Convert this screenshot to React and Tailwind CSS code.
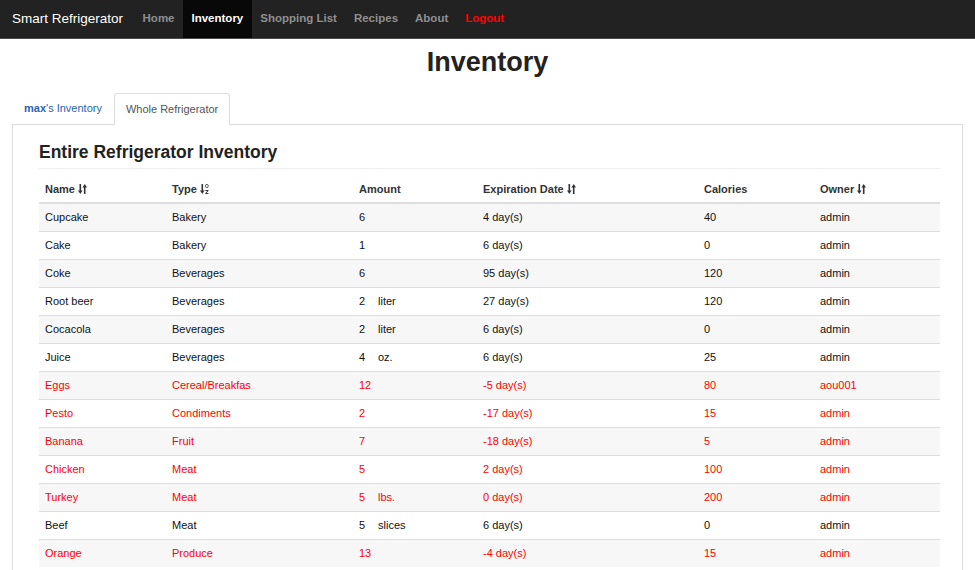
import React from 'react';

const NAV = [
  { label: 'Home' },
  { label: 'Inventory', active: true },
  { label: 'Shopping List' },
  { label: 'Recipes' },
  { label: 'About' },
  { label: 'Logout', danger: true },
];

const ROWS = [
  { name: 'Cupcake', type: 'Bakery', amount: '6', unit: '', exp: '4', cal: '40', owner: 'admin' },
  { name: 'Cake', type: 'Bakery', amount: '1', unit: '', exp: '6', cal: '0', owner: 'admin' },
  { name: 'Coke', type: 'Beverages', amount: '6', unit: '', exp: '95', cal: '120', owner: 'admin' },
  { name: 'Root beer', type: 'Beverages', amount: '2', unit: 'liter', exp: '27', cal: '120', owner: 'admin' },
  { name: 'Cocacola', type: 'Beverages', amount: '2', unit: 'liter', exp: '6', cal: '0', owner: 'admin' },
  { name: 'Juice', type: 'Beverages', amount: '4', unit: 'oz.', exp: '6', cal: '25', owner: 'admin' },
  { name: 'Eggs', type: 'Cereal/Breakfas', amount: '12', unit: '', exp: '-5', cal: '80', owner: 'aou001', expired: true },
  { name: 'Pesto', type: 'Condiments', amount: '2', unit: '', exp: '-17', cal: '15', owner: 'admin', expired: true },
  { name: 'Banana', type: 'Fruit', amount: '7', unit: '', exp: '-18', cal: '5', owner: 'admin', expired: true },
  { name: 'Chicken', type: 'Meat', amount: '5', unit: '', exp: '2', cal: '100', owner: 'admin', expired: true },
  { name: 'Turkey', type: 'Meat', amount: '5', unit: 'lbs.', exp: '0', cal: '200', owner: 'admin', expired: true },
  { name: 'Beef', type: 'Meat', amount: '5', unit: 'slices', exp: '6', cal: '0', owner: 'admin' },
  { name: 'Orange', type: 'Produce', amount: '13', unit: '', exp: '-4', cal: '15', owner: 'admin', expired: true },
];

function SortIcon() {
  return (
    <svg width="9" height="10" viewBox="0 0 9 10" className="inline-block ml-[3px] -mt-[2px]" fill="#333">
      <path d="M1.5 0h1.6v6.5H4.6L2.3 10 0 6.5h1.5z" />
      <path d="M5.9 10h1.6V3.5H9L6.7 0 4.4 3.5h1.5z" />
    </svg>
  );
}

function AlphaSortIcon() {
  return (
    <svg width="9" height="10" viewBox="0 0 9 10" className="inline-block ml-[3px] -mt-[2px]" fill="#333">
      <path d="M1.5 0h1.6v6.5H4.6L2.3 10 0 6.5h1.5z" />
      <rect x="5.6" y="0.5" width="2.6" height="3" rx="1" fill="none" stroke="#333" strokeWidth="0.9" />
      <path d="M5.4 6h3v0.9L6.5 9.1h1.9V10h-3v-0.9l1.9-2.2H5.4z" />
    </svg>
  );
}

function Navbar() {
  return (
    <nav className="h-[39px] bg-[#222] border-b border-[#4a4a4a] flex items-stretch">
      <div className="flex items-center pl-[12px] pr-[11px] text-[13.5px] text-white">Smart Refrigerator</div>
      <ul className="flex items-stretch">
        {NAV.map((item) => (
          <li
            key={item.label}
            className={`flex items-center px-[8.5px] text-[11.5px] font-bold ${
              item.active ? 'bg-[#080808] text-white' : item.danger ? 'text-[#ff0000]' : 'text-[#8f8f8f]'
            }`}
          >
            {item.label}
          </li>
        ))}
      </ul>
    </nav>
  );
}

export default function App() {
  return (
    <div className="min-h-[570px] bg-white text-[#333] font-['Liberation_Sans',Arial,sans-serif]">
      <Navbar />

      <h1 className="text-center text-[27px] font-bold leading-[30px] mt-[8px] mb-[15px] text-[#222]">Inventory</h1>

      {/* Tabs */}
      <div className="px-[12px]">
        <ul className="flex items-end h-[32px]">
          <li className="h-[32px] flex items-center px-[12px] text-[11px] text-[#2a64b3]">
            <span className="font-bold">max</span>'s Inventory
          </li>
          <li className="h-[32px] flex items-center px-[11px] text-[11px] text-[#555] bg-white border border-[#ddd] border-b-white rounded-t-[3px] relative z-10 -mb-px">
            Whole Refrigerator
          </li>
        </ul>

        {/* Panel */}
        <div className="border border-[#ddd] pl-[26px] pr-[22px] pb-[20px] h-[460px]">
          <h3 className="text-[17.5px] font-bold leading-[20px] pt-[17px] pb-[6px] border-b border-[#eee] text-[#222]">
            Entire Refrigerator Inventory
          </h3>

          <table className="w-full border-collapse text-[11px] mt-[3px]">
            <colgroup>
              <col className="w-[127px]" />
              <col className="w-[187px]" />
              <col className="w-[124px]" />
              <col className="w-[221px]" />
              <col className="w-[116px]" />
              <col />
            </colgroup>
            <thead>
              <tr className="border-b-2 border-[#ddd]">
                <th className="text-left font-bold px-[6px] pt-[9px] pb-[5px] leading-[16px]">
                  Name<SortIcon />
                </th>
                <th className="text-left font-bold px-[6px] pt-[9px] pb-[5px] leading-[16px]">
                  Type<AlphaSortIcon />
                </th>
                <th className="text-left font-bold px-[6px] pt-[9px] pb-[5px] leading-[16px]">Amount</th>
                <th className="text-left font-bold px-[6px] pt-[9px] pb-[5px] leading-[16px]">
                  Expiration Date<SortIcon />
                </th>
                <th className="text-left font-bold px-[6px] pt-[9px] pb-[5px] leading-[16px]">Calories</th>
                <th className="text-left font-bold px-[6px] pt-[9px] pb-[5px] leading-[16px]">
                  Owner<SortIcon />
                </th>
              </tr>
            </thead>
            <tbody>
              {ROWS.map((r, i) => (
                <tr
                  key={r.name}
                  className={`border-t border-[#ddd] h-[28px] ${i % 2 === 0 ? 'bg-[#f7f7f7]' : 'bg-white'} ${
                    r.expired ? 'text-[#ff0000]' : 'text-[#111]'
                  }`}
                >
                  <td className="px-[6px] py-0">{r.name}</td>
                  <td className="px-[6px] py-0">{r.type}</td>
                  <td className="px-[6px] py-0">
                    <span className="inline-block w-[19px]">{r.amount}</span>
                    {r.unit}
                  </td>
                  <td className="px-[6px] py-0">{r.exp} day(s)</td>
                  <td className="px-[6px] py-0">{r.cal}</td>
                  <td className="px-[6px] py-0">{r.owner}</td>
                </tr>
              ))}
            </tbody>
          </table>
        </div>
      </div>
    </div>
  );
}
